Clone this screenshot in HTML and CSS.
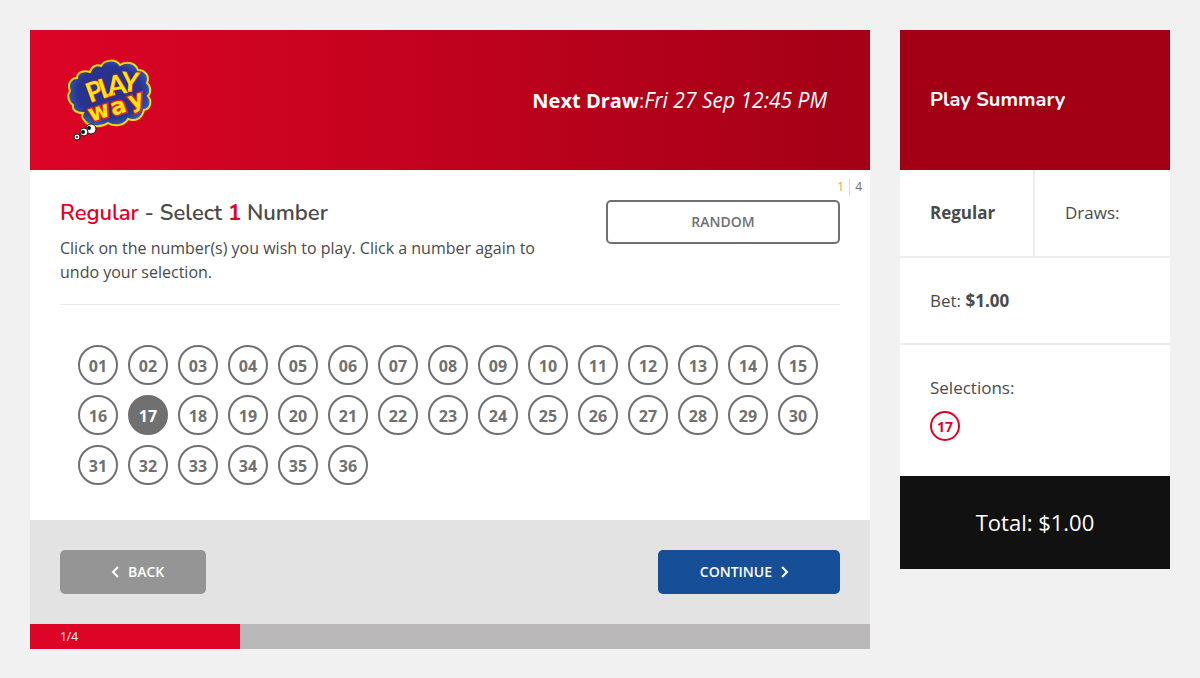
FILE: index.html
```html
<!DOCTYPE html>
<html lang="en">
<head>
<meta charset="utf-8">
<meta name="viewport" content="width=device-width, initial-scale=1">
<title>Play Way</title>
<link rel="stylesheet" href="styles.css">
</head>
<body>
<div class="layout">
  <main class="game">
    <header class="game-header">
      <svg class="logo" viewBox="0 0 100 100" role="img" aria-label="Play Way">
        <defs>
          <radialGradient id="cloud" cx="50%" cy="48%" r="55%">
            <stop offset="0.7" stop-color="#27338f"/>
            <stop offset="1" stop-color="#3560b8"/>
          </radialGradient>
        </defs>
        <path d="M24 70C21 67 22 65 23 63C16 63 12 60 13 55C8 52 7 45 10 41C7 34 11 28 17 28C17 22 24 20 30 22C32 16 37 14 41 16C45 9 56 9 60 15C66 11 75 12 78 20C85 20 90 26 87 33C91 36 91 43 88 46C92 51 91 59 84 60C82 68 76 72 68 69C64 76 54 77 48 73C41 78 28 77 24 70Z" fill="url(#cloud)" stroke="#f6d813" stroke-width="2"/>
        <g fill="#fff" stroke="#1b1010" stroke-width="1">
          <circle cx="31" cy="79" r="5"/><circle cx="24" cy="82" r="4"/><circle cx="17" cy="87" r="3"/>
        </g>
        <g fill="#1b1010"><circle cx="29" cy="78" r="2"/><circle cx="23" cy="82" r="2"/><circle cx="17" cy="87" r="1"/></g>
        <g class="logo-play">
          <text x="30" y="53" transform="rotate(-20 30 53)">P</text>
          <text x="42" y="49" transform="rotate(-18 42 49)">L</text>
          <text x="49" y="46" transform="rotate(-10 49 46)">A</text>
          <text x="61" y="41" transform="rotate(4 61 41)">Y</text>
        </g>
        <g class="logo-way">
          <text x="31" y="72" transform="rotate(-18 31 72)">w</text>
          <text x="53" y="66" transform="rotate(-18 53 66)">a</text>
          <text x="71" y="59" transform="rotate(-18 71 59)">y</text>
        </g>
      </svg>
      <p class="next-draw"><strong>Next Draw</strong>:<em class="draw-date">Fri 27 Sep 12:45 PM</em></p>
    </header>

    <section class="game-body">
      <div class="steps"><span class="step-current">1</span><span class="step-total">4</span></div>
      <div class="intro">
        <div class="intro-text">
          <h1 class="title"><span class="accent">Regular</span> - Select <strong class="accent">1</strong> Number</h1>
          <p class="description">Click on the number(s) you wish to play. Click a number again to undo your selection.</p>
        </div>
        <button class="btn btn-random" type="button">RANDOM</button>
      </div>
      <div class="numbers" role="group" aria-label="Numbers">
        <button class="number" type="button">01</button>
        <button class="number" type="button">02</button>
        <button class="number" type="button">03</button>
        <button class="number" type="button">04</button>
        <button class="number" type="button">05</button>
        <button class="number" type="button">06</button>
        <button class="number" type="button">07</button>
        <button class="number" type="button">08</button>
        <button class="number" type="button">09</button>
        <button class="number" type="button">10</button>
        <button class="number" type="button">11</button>
        <button class="number" type="button">12</button>
        <button class="number" type="button">13</button>
        <button class="number" type="button">14</button>
        <button class="number" type="button">15</button>
        <button class="number" type="button">16</button>
        <button class="number selected" type="button" aria-pressed="true">17</button>
        <button class="number" type="button">18</button>
        <button class="number" type="button">19</button>
        <button class="number" type="button">20</button>
        <button class="number" type="button">21</button>
        <button class="number" type="button">22</button>
        <button class="number" type="button">23</button>
        <button class="number" type="button">24</button>
        <button class="number" type="button">25</button>
        <button class="number" type="button">26</button>
        <button class="number" type="button">27</button>
        <button class="number" type="button">28</button>
        <button class="number" type="button">29</button>
        <button class="number" type="button">30</button>
        <button class="number" type="button">31</button>
        <button class="number" type="button">32</button>
        <button class="number" type="button">33</button>
        <button class="number" type="button">34</button>
        <button class="number" type="button">35</button>
        <button class="number" type="button">36</button>
      </div>
    </section>

    <footer class="actions">
      <button class="btn btn-back" type="button">
        <svg class="chevron" viewBox="0 0 8 12" aria-hidden="true"><path d="M7 1L2 6l5 5"/></svg>
        BACK
      </button>
      <button class="btn btn-continue" type="button">
        CONTINUE
        <svg class="chevron" viewBox="0 0 8 12" aria-hidden="true"><path d="M1 1l5 5-5 5"/></svg>
      </button>
    </footer>
    <div class="progress"><div class="progress-bar" style="width: 25%">1/4</div></div>
  </main>

  <aside class="summary">
    <h2 class="summary-title">Play Summary</h2>
    <div class="summary-row summary-split">
      <div class="summary-cell"><strong>Regular</strong></div>
      <div class="summary-cell">Draws:</div>
    </div>
    <div class="summary-row summary-bet">Bet: <strong>$1.00</strong></div>
    <div class="selections">
      Selections:
      <div class="picks"><span class="pick">17</span></div>
    </div>
    <div class="total">Total: $1.00</div>
  </aside>
</div>
</body>
</html>
```
FILE: styles.css
```css
* { box-sizing: border-box; }

body {
  margin: 0;
  background: #f1f1f1;
  color: #4a4a4a;
  font: 16px/24px "Open Sans", "Noto Sans", sans-serif;
}

h1, h2, p { margin: 0; }
button { font-family: inherit; cursor: pointer; }

.layout {
  display: grid;
  grid-template-columns: minmax(0, 1fr) 270px;
  gap: 30px;
  align-items: start;
  padding: 30px;
}

.game, .summary { background: #fff; }

.game-header {
  display: flex;
  align-items: center;
  justify-content: space-between;
  padding: 20px 43px 20px 30px;
  background: linear-gradient(to right, #dd0426, #a30016);
  color: #fff;
}

.logo { display: block; width: 100px; height: 100px; }

.logo-play, .logo-way {
  fill: #ffe413;
  stroke: #d5261f;
  paint-order: stroke;
}

.logo-play { font: 700 27px Lato, sans-serif; stroke-width: 1px; }
.logo-way { font: 700 23px "DejaVu Sans", sans-serif; stroke-width: 3px; }

.next-draw { font-size: 20px; line-height: 26px; }
.draw-date { font-size: 21px; }

.game-body { position: relative; padding: 30px 30px 35px; }

.steps {
  position: absolute;
  top: 8px;
  right: 8px;
  display: flex;
  font-size: 12px;
  line-height: 18px;
}

.step-current { padding-right: 5px; color: #f9a13b; }
.step-total { padding-left: 5px; border-left: 1px solid #d8d8d8; color: #707070; }

.intro {
  display: grid;
  grid-template-columns: minmax(0, 1fr) 30%;
  gap: 30px;
  align-items: start;
  padding-bottom: 20px;
  border-bottom: 1px solid #ebebeb;
}

.title {
  margin-bottom: 10px;
  font: 600 22px/26px Nunito, "Open Sans", sans-serif;
}

.title strong { font-weight: 700; }

.accent { color: #dd0426; }

.btn {
  display: flex;
  align-items: center;
  justify-content: center;
  gap: 9px;
  height: 44px;
  border: 0;
  border-radius: 5px;
  color: #fff;
  font-size: 14px;
  font-weight: 600;
  line-height: 18px;
}

.btn-random { padding: 0; border: 2px solid #707070; background: #fff; color: #707070; }
.btn-back { padding: 0 42px 0 51px; background: #959595; }
.btn-continue { padding: 0 51px 0 42px; background: #174e98; }

.chevron { width: 8px; height: 12px; fill: none; stroke: #fff; stroke-width: 2; }

.numbers {
  display: flex;
  flex-wrap: wrap;
  gap: 10px;
  padding: 40px 0 0 18px;
}

.number {
  width: 40px;
  height: 40px;
  padding: 2px 0 0;
  border: 2px solid #707070;
  border-radius: 50%;
  background: #fff;
  color: #707070;
  font-size: 16px;
  font-weight: 700;
}

.number.selected { background: #707070; color: #fff; }

.actions {
  display: flex;
  justify-content: space-between;
  padding: 30px;
  background: #e3e3e3;
}

.progress { background: #bab8b9; }

.progress-bar {
  padding-left: 30px;
  background: #dd0426;
  color: #fff;
  font-size: 12px;
  line-height: 25px;
}

.summary { font-size: 17px; line-height: 26px; }

.summary-title {
  padding: 56px 30px;
  background: #a30016;
  color: #fff;
  font: 700 20px/28px Nunito, "Open Sans", sans-serif;
}

.summary-row { border-bottom: 2px solid #ededed; }
.summary-split { display: grid; grid-template-columns: 1fr 1fr; }
.summary-cell { padding: 30px; }
.summary-cell:first-child { border-right: 2px solid #ededed; }
.summary-bet { padding: 30px 30px 29px; }

.selections { padding: 30px 30px 35px; }
.picks { display: flex; flex-wrap: wrap; gap: 8px; padding-top: 10px; }

.pick {
  width: 30px;
  height: 30px;
  border: 2px solid #dd0426;
  border-radius: 50%;
  color: #dd0426;
  font-size: 14px;
  font-weight: 700;
  line-height: 28px;
  text-align: center;
}

.total {
  padding: 30px;
  background: #111;
  color: #fff;
  font-size: 22px;
  line-height: 33px;
  text-align: center;
}

@media (max-width: 900px) {
  .layout { grid-template-columns: minmax(0, 1fr); }
}
```
